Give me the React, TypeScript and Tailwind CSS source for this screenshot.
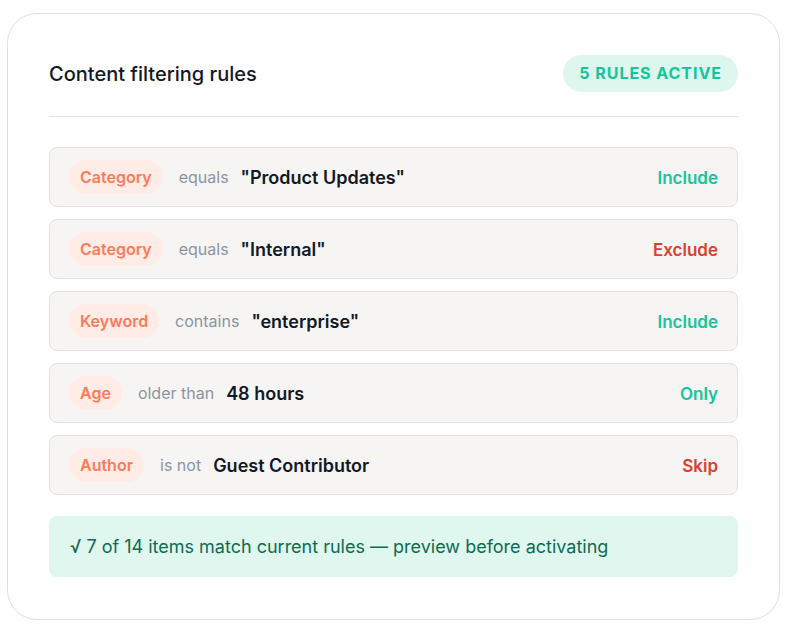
import React from 'react'

type Rule = {
  field: string
  op: string
  value: string
  action: string
  tone: 'good' | 'bad'
}

const RULES: Rule[] = [
  { field: 'Category', op: 'equals', value: '"Product Updates"', action: 'Include', tone: 'good' },
  { field: 'Category', op: 'equals', value: '"Internal"', action: 'Exclude', tone: 'bad' },
  { field: 'Keyword', op: 'contains', value: '"enterprise"', action: 'Include', tone: 'good' },
  { field: 'Age', op: 'older than', value: '48 hours', action: 'Only', tone: 'good' },
  { field: 'Author', op: 'is not', value: 'Guest Contributor', action: 'Skip', tone: 'bad' },
]

function RuleRow({ rule }: { rule: Rule }) {
  return (
    <div className="flex h-[60px] items-center justify-between rounded-lg border border-[#e3e0dd] bg-[#f6f5f3] pl-[19px] pr-[19px]">
      <div className="flex items-center">
        <span className="rounded-full bg-[#ffece6] px-[11px] py-[6px] text-[16px] font-semibold leading-[22px] text-[#ff7a59]">
          {rule.field}
        </span>
        <span className="ml-4 text-[16px] text-[#8a94a3]">{rule.op}</span>
        <span className="ml-3 text-[18px] font-semibold text-[#111827]">{rule.value}</span>
      </div>
      <span
        className={
          rule.tone === 'good'
            ? 'mt-[1px] text-[17px] font-semibold leading-[22px] text-[#16c49b]'
            : 'mt-[1px] text-[17px] font-semibold leading-[22px] text-[#d9412e]'
        }
      >
        {rule.action}
      </span>
    </div>
  )
}

export default function App() {
  return (
    <div className="min-h-screen bg-white p-[7px] pt-[13px] font-['Inter',sans-serif]">
      <div className="w-[773px] rounded-[30px] border border-[#e0e0e0] bg-white px-[41px] pb-[42px] pt-[41px]">
        <div className="flex items-center justify-between border-b border-[#e5e5e5] pb-[24px]">
          <h2 className="text-[20px] font-medium text-[#111827]">Content filtering rules</h2>
          <span className="rounded-full bg-[#ddf7ef] px-4 py-[7px] text-[16px] font-bold leading-[23px] tracking-[0.06em] text-[#16c49b]">
            5 RULES ACTIVE
          </span>
        </div>
        <div className="mt-[30px] flex flex-col gap-3">
          {RULES.map((r, i) => (
            <RuleRow key={i} rule={r} />
          ))}
        </div>
        <div className="mt-[21px] flex h-[61px] items-center rounded-lg bg-[#dff7ef] pl-[21px] text-[18px] text-[#0d6b50]">
          √ 7 of 14 items match current rules — preview before activating
        </div>
      </div>
    </div>
  )
}
